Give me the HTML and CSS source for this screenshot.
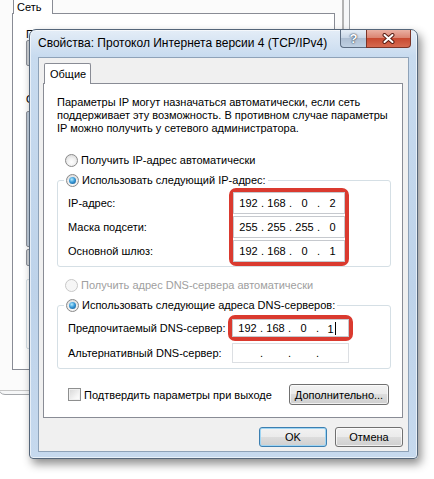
FILE: index.html
```html
<!DOCTYPE html>
<html lang="ru">

<head>
    <meta charset="UTF-8">
    <meta name="viewport" content="width=device-width, initial-scale=1.0">
    <title>Свойства: Протокол Интернета версии 4 (TCP/IPv4)</title>
    <link rel="stylesheet" href="styles.css">
</head>

<body>
    <div class="desktop">

        <!-- window behind: network connection properties, mostly covered -->
        <div class="bgwin">
            <div class="bg-client">
                <div class="bg-tabs"><span class="bg-tab">Сеть</span></div>
                <div class="bg-panel">
                    <p class="bg-text">П</p>
                    <div class="bg-box bg-adapter"></div>
                    <p class="bg-text bg-gap">О</p>
                    <div class="bg-box bg-list"></div>
                    <div class="bg-box bg-btn"></div>
                    <div class="bg-box bg-desc"></div>
                </div>
            </div>
        </div>

        <!-- the dialog itself -->
        <div class="dialog">
            <div class="titlebar">
                <span class="title">Свойства: Протокол Интернета версии 4 (TCP/IPv4)</span>
                <div class="caption-btns">
                    <span class="cap-btn help">?</span>
                    <span class="cap-btn close">
                        <svg width="13" height="11" viewBox="0 0 13 11">
                            <path d="M2.5 2 L10.5 9 M10.5 2 L2.5 9" stroke="#5a1e14" stroke-width="4" stroke-linecap="round" />
                            <path d="M2.5 2 L10.5 9 M10.5 2 L2.5 9" stroke="#fff" stroke-width="2" stroke-linecap="round" />
                        </svg>
                    </span>
                </div>
            </div>

            <div class="client">
                <div class="tabs"><span class="tab">Общие</span></div>

                <div class="panel">
                    <div class="intro">
                        <span>Параметры IP могут назначаться автоматически, если сеть</span>
                        <span>поддерживает эту возможность. В противном случае параметры</span>
                        <span>IP можно получить у сетевого администратора.</span>
                    </div>

                    <label class="radio-row first"><span class="radio"></span>Получить IP-адрес автоматически</label>

                    <div class="group">
                        <div class="group-title"><span class="radio checked"></span>Использовать следующий IP-адрес:</div>
                        <div class="ip-grid">
                            <div class="labels">
                                <span>IP-адрес:</span>
                                <span>Маска подсети:</span>
                                <span>Основной шлюз:</span>
                            </div>
                            <div class="mark">
                                <div class="ip"><span>192</span><i>.</i><span>168</span><i>.</i><span>0</span><i>.</i><span>2</span></div>
                                <div class="ip"><span>255</span><i>.</i><span>255</span><i>.</i><span>255</span><i>.</i><span>0</span></div>
                                <div class="ip"><span>192</span><i>.</i><span>168</span><i>.</i><span>0</span><i>.</i><span>1</span></div>
                            </div>
                        </div>
                    </div>

                    <label class="radio-row disabled"><span class="radio off"></span>Получить адрес DNS-сервера автоматически</label>

                    <div class="group dns">
                        <div class="group-title"><span class="radio checked"></span>Использовать следующие адреса DNS-серверов:</div>
                        <div class="dns-grid">
                            <span>Предпочитаемый DNS-сервер:</span>
                            <div class="mark">
                                <div class="ip wide"><span>192</span><i>.</i><span>168</span><i>.</i><span>0</span><i>.</i><span>1<b class="caret"></b></span></div>
                            </div>
                            <span>Альтернативный DNS-сервер:</span>
                            <div class="ip wide alone"><span></span><i>.</i><span></span><i>.</i><span></span><i>.</i><span></span></div>
                        </div>
                    </div>

                    <div class="confirm-row">
                        <label class="check-label"><span class="checkbox"></span>Подтвердить параметры при выходе</label>
                        <button class="btn advanced">Дополнительно...</button>
                    </div>
                </div>

                <div class="footer">
                    <button class="btn default">OK</button>
                    <button class="btn">Отмена</button>
                </div>
            </div>
        </div>

    </div>
</body>

</html>
```

FILE: styles.css
```css
* {
    box-sizing: border-box;
    margin: 0;
    padding: 0;
}

body {
    width: 434px;
    height: 479px;
    overflow: hidden;
    background: #fff;
    font-family: "Liberation Sans", Arial, sans-serif;
    font-size: 11px;
    color: #000;
}

.desktop {
    position: relative;
    width: 434px;
    height: 479px;
}

/* ---------- window in the back ---------- */

.bgwin {
    position: absolute;
    left: -2px;
    top: -11px;
    width: 352px;
    height: 406px;
    border: 1px solid #a3a6aa;
    border-radius: 0 0 7px 7px;
    background: #f6f7f8;
    padding: 0 5px 3px 0;
    display: flex;
}

.bg-client {
    flex: 1;
    display: flex;
    flex-direction: column;
    background: #fbfbfb;
    border-right: 2px solid #b3b3b3;
    border-bottom: 1px solid #c6c6c6;
}

.bg-tabs {
    height: 24px;
    padding: 2px 0 0 14px;
    margin-bottom: -1px;
}

.bg-tab {
    display: inline-block;
    position: relative;
    z-index: 1;
    width: 40px;
    height: 22px;
    padding: 8px 0 0 3px;
    border: 1px solid #898c95;
    border-bottom: none;
    background: #fff;
}

.bg-panel {
    height: 357px;
    margin: 0 7px 0 13px;
    border: 1px solid #898c95;
    background: #fff;
    padding: 14px 0 0 13px;
}

.bg-text {
    line-height: 13px;
}

.bg-gap {
    margin-top: 27px;
}

.bg-box {
    width: 290px;
    border: 1px solid #8d9098;
    border-radius: 2px;
    background: linear-gradient(90deg, #c9cdd2, #e7e9ec 4px, #f4f4f4);
}

.bg-adapter {
    height: 26px;
    margin-top: -1px;
}

.bg-list {
    height: 136px;
    margin-top: 5px;
    background: linear-gradient(90deg, #b8c6d6, #dfe7f0 4px, #fff);
}

.bg-btn {
    height: 17px;
    margin-top: 2px;
}

.bg-desc {
    height: 70px;
    margin-top: 13px;
    border-color: #d5dfe5;
    background: #fff;
}

/* ---------- dialog ---------- */

.dialog {
    position: absolute;
    left: 29px;
    top: 29px;
    width: 389px;
    height: 430px;
    display: flex;
    flex-direction: column;
    padding: 0 8px 6px 8px;
    border: 1px solid #55667a;
    border-radius: 7px 7px 4px 4px;
    background: linear-gradient(#e4edf7, #c8dbef 26px, #bed3ea 60%, #c6d9ee);
    box-shadow: 3px 5px 10px rgba(0, 0, 0, .45), inset 0 0 0 1px rgba(255, 255, 255, .6);
}

.titlebar {
    height: 27px;
    display: flex;
    align-items: flex-start;
}

.title {
    font-size: 12px;
    line-height: 27px;
    white-space: nowrap;
}

.caption-btns {
    display: flex;
    margin-left: auto;
    margin-right: -2px;
}

.cap-btn {
    height: 18px;
    display: flex;
    align-items: center;
    justify-content: center;
    border: 1px solid #5c6d82;
    border-top: none;
}

.help {
    width: 26px;
    border-right: none;
    border-radius: 0 0 0 4px;
    background: linear-gradient(#e6eef7, #c9d7e7 45%, #aebfd3 50%, #bfd0e2);
    color: #fff;
    font-size: 13px;
    font-weight: bold;
    text-shadow: 0 0 2px #2b3a4e, 0 0 1px #2b3a4e;
}

.close {
    width: 45px;
    border-color: #7b3427;
    border-radius: 0 0 4px 0;
    background: linear-gradient(#eab0a3, #db8572 45%, #c84a31 50%, #d66a50);
}

.client {
    flex: 1;
    display: flex;
    flex-direction: column;
    background: #f0f0f0;
    border: 1px solid #8ea2b8;
}

.tabs {
    height: 26px;
    padding: 5px 0 0 5px;
    margin-bottom: -1px;
}

.tab {
    display: inline-block;
    position: relative;
    z-index: 1;
    width: 47px;
    height: 21px;
    padding-left: 5px;
    line-height: 20px;
    border: 1px solid #898c95;
    border-bottom: none;
    border-radius: 2px 2px 0 0;
    background: #fff;
}

.panel {
    margin: 0 5px 0 4px;
    padding: 12px 11px 12px 13px;
    border: 1px solid #898c95;
    background: #fff;
}

.intro span {
    display: block;
    height: 13px;
    line-height: 13px;
    white-space: nowrap;
}

.radio-row {
    display: flex;
    align-items: center;
    gap: 3px;
    height: 20px;
    margin-top: 8px;
    padding-left: 8px;
}

.radio-row.first {
    margin-top: 15px;
}

.radio-row.disabled {
    color: #a0a0a0;
}

.radio {
    position: relative;
    flex: none;
    width: 13px;
    height: 13px;
    border-radius: 50%;
    border: 1px solid #8a8a8a;
    background: radial-gradient(circle at 50% 65%, #fff 0, #f2f2f2 40%, #d2d2d2 100%);
}

.radio.checked::after {
    content: "";
    position: absolute;
    left: 2px;
    top: 2px;
    width: 7px;
    height: 7px;
    border-radius: 50%;
    background: radial-gradient(circle at 40% 35%, #b4ecff 0, #3a9ad8 45%, #0e4d84 100%);
}

.radio.off {
    border-color: #c8c8c8;
    background: #f6f6f6;
}

.group {
    margin-top: 10px;
    padding: 0 0 0 10px;
    border: 1px solid #d5dfe5;
    border-radius: 3px;
}

.group.dns {
    padding-bottom: 5px;
}

.group-title {
    display: flex;
    align-items: center;
    gap: 3px;
    width: max-content;
    height: 14px;
    margin: -8px 0 1px -4px;
    padding: 0 2px;
    background: #fff;
}

.group.dns .group-title {
    margin-bottom: 3px;
}

.ip-grid {
    display: flex;
}

.labels {
    display: flex;
    flex-direction: column;
    gap: 2px;
    width: 161px;
    padding-top: 4px;
}

.labels span {
    height: 22px;
    line-height: 22px;
}

/* red highlight drawn around the fields */
.mark {
    display: flex;
    flex-direction: column;
    gap: 2px;
    border: 4px solid #da3a2f;
    border-radius: 7px;
}

.ip {
    display: flex;
    align-items: center;
    width: 112px;
    height: 22px;
    padding-left: 3px;
    border: 1px solid #c6c9ce;
    background: #fff;
}

.ip span {
    width: 23px;
    text-align: center;
}

.ip i {
    width: 5px;
    font-style: normal;
    text-align: center;
}

.ip.wide {
    width: 117px;
    height: 18px;
}

.ip.alone {
    height: 20px;
    margin-left: 4px;
    border-color: #dcdfe3;
}

.caret {
    display: inline-block;
    width: 1px;
    height: 13px;
    margin-left: 1px;
    vertical-align: -2px;
    background: #000;
}

.dns-grid {
    display: grid;
    grid-template-columns: 160px auto;
    grid-template-rows: 26px 20px;
    row-gap: 2px;
    align-items: center;
    justify-items: start;
}

.confirm-row {
    display: flex;
    align-items: center;
    height: 21px;
    margin-top: 15px;
    padding: 0 2px 0 11px;
}

.check-label {
    display: flex;
    align-items: center;
    gap: 3px;
}

.checkbox {
    width: 13px;
    height: 13px;
    border: 1px solid #8e8f8f;
    background: linear-gradient(135deg, #d6d6d6, #f6f6f6 70%, #fff);
    box-shadow: inset 0 0 0 1px #f0f0f0;
}

.btn {
    display: flex;
    align-items: center;
    justify-content: center;
    height: 20px;
    font: inherit;
    color: #000;
    border: 1px solid #707070;
    border-radius: 3px;
    background: linear-gradient(#f2f2f2 0%, #ebebeb 49%, #dddddd 50%, #cfcfcf 100%);
    box-shadow: inset 0 0 0 1px rgba(255, 255, 255, .7);
}

.advanced {
    width: 100px;
    height: 21px;
    margin-left: auto;
}

.footer {
    display: flex;
    justify-content: flex-end;
    gap: 8px;
    margin-top: 9px;
    padding-right: 5px;
}

.footer .btn {
    width: 68px;
}

.btn.default {
    border-color: #3c7fb1;
    box-shadow: inset 0 0 0 1px #9fd5f3;
}
```
